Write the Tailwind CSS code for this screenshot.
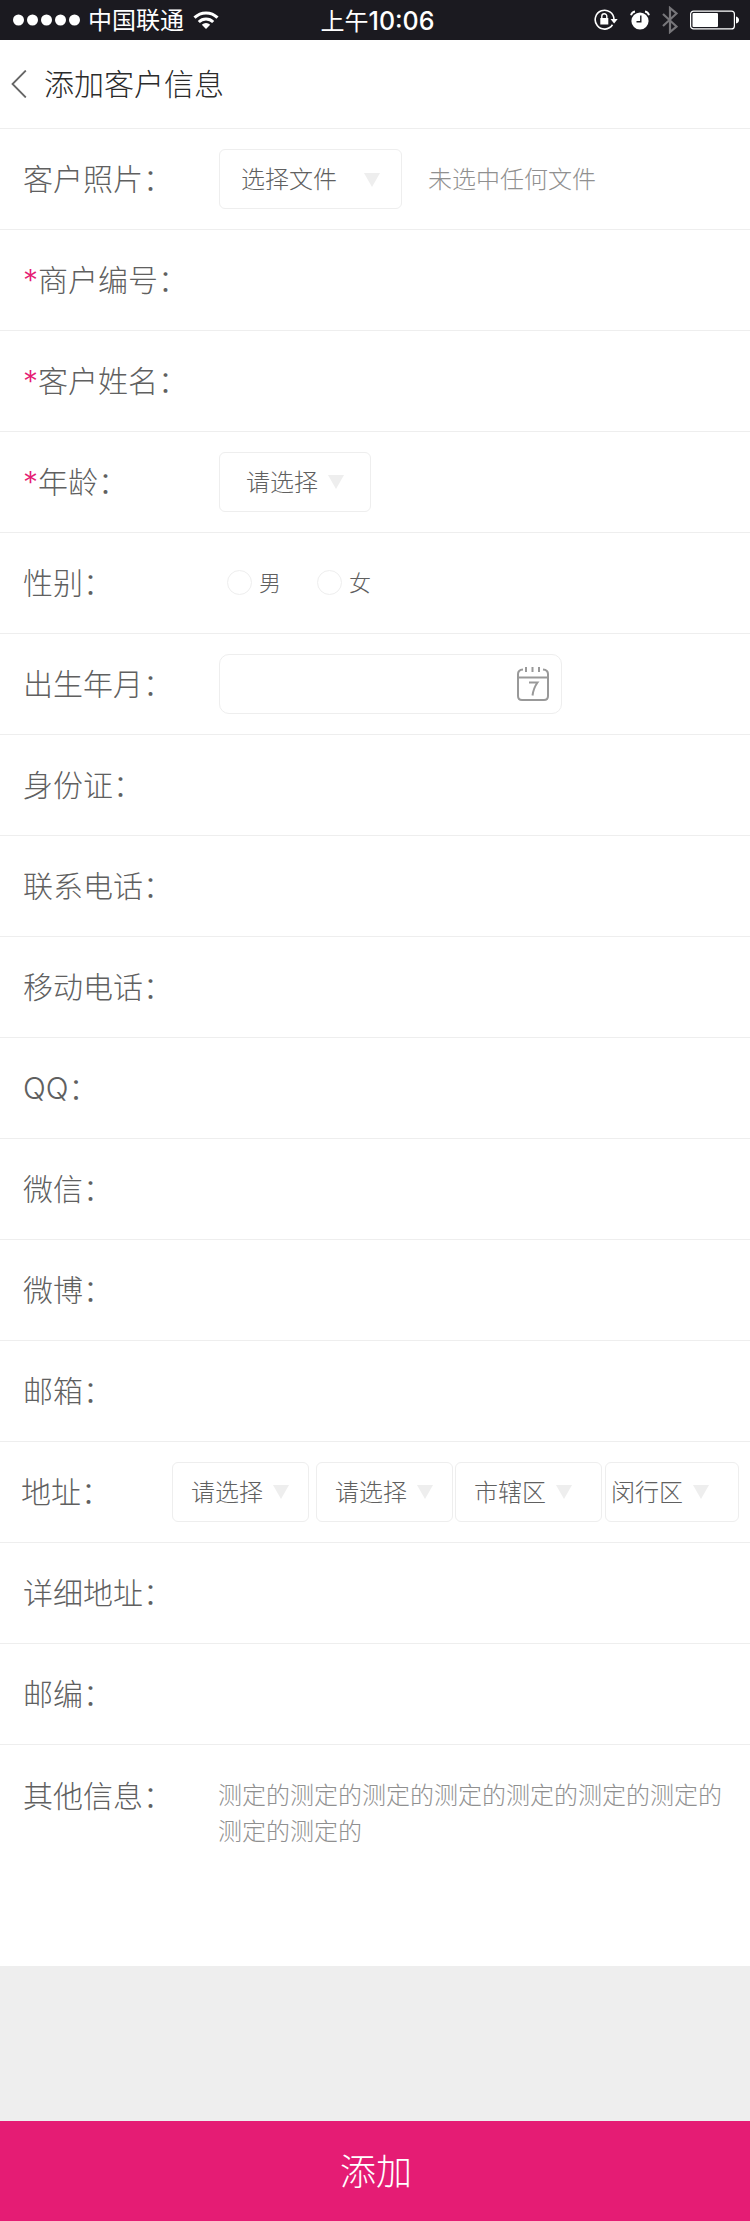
<!DOCTYPE html>
<html lang="zh-CN">
<head>
<meta charset="utf-8">
<meta name="viewport" content="width=device-width, initial-scale=1">
<title>添加客户信息</title>
<script src="https://cdn.jsdelivr.net/npm/@tailwindcss/browser@4"></script>
</head>
<body class="flex min-h-screen flex-col bg-[#eeeeee] font-['Inter','Noto_Sans_CJK_SC',sans-serif] font-light text-[#606060]">

<div class="grid h-10 grid-cols-[1fr_auto_1fr] items-center bg-[#1b1a20] pr-[11px] pl-[13px] text-2xl text-white">
  <div class="flex items-center">
    <svg class="h-3 w-[67px]" viewBox="0 0 67 12" fill="#fff" aria-hidden="true"><circle cx="5.5" cy="6" r="5.5"/><circle cx="19.5" cy="6" r="5.5"/><circle cx="33.5" cy="6" r="5.5"/><circle cx="47.5" cy="6" r="5.5"/><circle cx="61.5" cy="6" r="5.5"/></svg>
    <span class="ml-2 pt-0.5 leading-9 font-normal">中国联通</span>
    <svg class="ml-[9px] h-[18px] w-[26px]" viewBox="0 0 26 18" fill="none" stroke="#fff" stroke-width="3" aria-hidden="true"><path d="M1.5 6.6a16.4 16.4 0 0 1 23 0"/><path d="M5.8 11a10.3 10.3 0 0 1 14.4 0"/><path d="M13 18l-4.2-4.2a6 6 0 0 1 8.4 0z" fill="#fff" stroke="none"/></svg>
  </div>
  <div class="pt-0.5 pl-[3px] leading-9 font-normal">上午<span class="text-[25px] font-medium">10:06</span></div>
  <div class="flex items-center justify-end">
    <svg class="h-[22px] w-6" viewBox="0 0 24 22" fill="none" stroke="#fff" stroke-width="1.6" aria-hidden="true"><path d="M18.5 15.8A9.4 9.4 0 1 1 20 10.5"/><path d="M16.5 10h7.2l-3.6 4.4z" fill="#fff" stroke="none"/><rect x="6.3" y="9" width="8" height="6.5" fill="#fff" stroke="none"/><path d="M7.8 9.500V7.300a2.500 2.500 0 0 1 5 0v2.200" stroke-width="1.400"/></svg>
    <svg class="ml-3 h-[20px] w-5" viewBox="0 0 20 20" aria-hidden="true"><circle cx="10" cy="11" r="8.6" fill="#fff"/><path d="M1 5.200A5 5 0 0 1 5 1.500M19 5.200A5 5 0 0 0 15 1.500" fill="none" stroke="#fff" stroke-width="1.800"/><path d="M10.800 5.500v6.300H6.500" fill="none" stroke="#1b1a20" stroke-width="1.400"/></svg>
    <svg class="ml-3 h-7 w-4" viewBox="0 0 16 28" fill="none" stroke="#77767a" stroke-width="2.200" aria-hidden="true"><path d="M1 8l13.500 12.500L8 26V2l6.500 5.500L1 20"/></svg>
    <svg class="ml-3 h-5 w-[49px]" viewBox="0 0 49 20" aria-hidden="true"><rect x=".6" y="1.100" width="43.800" height="17.800" rx="3" fill="none" stroke="#fff" stroke-width="1.200"/><rect x="2.500" y="3" width="25.500" height="14" rx="1" fill="#fff"/><path d="M46 6.500q3 1 3 3.500t-3 3.500z" fill="#fff"/></svg>
  </div>
</div>

<header class="flex h-[89px] items-center border-b border-[#eeeeee] bg-white pl-[11px] text-[#2b2b2b]">
  <a href="#" aria-label="返回"><svg class="h-7 w-4" viewBox="0 0 16 28" fill="none" stroke="#666" stroke-width="1.800"><path d="M14.800.5L1.500 14l13.300 13.500"/></svg></a>
  <h1 class="ml-[17px] text-3xl">添加客户信息</h1>
</header>

<form class="flex flex-1 flex-col">
  <div class="bg-white text-3xl">
    <div class="flex h-[101px] items-center border-b border-[#eeeeee] pl-[23px]">
      <span class="w-[196px]">客户照片：</span>
      <button type="button" class="flex h-[60px] w-[183px] items-center justify-between rounded-md border border-[#eeeeee] px-[21px] pt-0.5 text-2xl">选择文件<svg class="h-[14px] w-4" viewBox="0 0 16 14" fill="#eee"><path d="M0 0h16L8 14z"/></svg></button>
      <span class="ml-[26px] pt-0.5 text-2xl text-[#909090]">未选中任何文件</span>
    </div>
    <div class="flex h-[101px] items-center border-b border-[#eeeeee] pl-[23px]">
      <label for="merchant" class="w-[196px]"><span class="text-[#e51c74]">*</span>商户编号：</label>
      <input id="merchant" class="h-[60px] min-w-0 flex-1 px-5 text-2xl outline-none">
    </div>
    <div class="flex h-[101px] items-center border-b border-[#eeeeee] pl-[23px]">
      <label for="name" class="w-[196px]"><span class="text-[#e51c74]">*</span>客户姓名：</label>
      <input id="name" class="h-[60px] min-w-0 flex-1 px-5 text-2xl outline-none">
    </div>
    <div class="flex h-[101px] items-center border-b border-[#eeeeee] pl-[23px]">
      <label for="age" class="w-[196px]"><span class="text-[#e51c74]">*</span>年龄：</label>
      <div class="relative">
        <select id="age" class="block h-[60px] w-[152px] appearance-none rounded-md border border-[#eeeeee] pt-0.5 pl-[26px] text-2xl"><option>请选择</option></select>
        <svg class="pointer-events-none absolute top-[23px] right-[27px] h-[14px] w-4" viewBox="0 0 16 14" fill="#eee"><path d="M0 0h16L8 14z"/></svg>
      </div>
    </div>
    <div class="flex h-[101px] items-center border-b border-[#eeeeee] pl-[23px]">
      <span class="w-[204px]">性别：</span>
      <label class="mr-9 flex items-center gap-[7px] text-[22px]"><input type="radio" name="sex" class="size-[25px] appearance-none rounded-full border border-[#eeeeee] checked:border-8 checked:border-[#e51c74]">男</label>
      <label class="flex items-center gap-[7px] text-[22px]"><input type="radio" name="sex" class="size-[25px] appearance-none rounded-full border border-[#eeeeee] checked:border-8 checked:border-[#e51c74]">女</label>
    </div>
    <div class="flex h-[101px] items-center border-b border-[#eeeeee] pl-[23px]">
      <label for="birth" class="w-[196px]">出生年月：</label>
      <div class="relative">
        <input id="birth" class="block h-[60px] w-[343px] rounded-[10px] border border-[#eeeeee] pr-14 pl-5 text-2xl outline-none">
        <svg class="pointer-events-none absolute top-3 right-[13px] h-[35px] w-8" viewBox="0 0 32 35" fill="none" stroke="#999" stroke-width="2" aria-hidden="true"><path d="M6 3.500Q1 4 1 8v22q0 4 4 4h22q4 0 4-4V8q0-4-5-4.500M1 11.500h30"/><path d="M9 1v5M15.500 1v5M22 1v5"/><path d="M12 16.500h8.500q-4 5.500-5 13"/></svg>
      </div>
    </div>
    <div class="flex h-[101px] items-center border-b border-[#eeeeee] pl-[23px]">
      <label for="idcard" class="w-[196px]">身份证：</label>
      <input id="idcard" class="h-[60px] min-w-0 flex-1 px-5 text-2xl outline-none">
    </div>
    <div class="flex h-[101px] items-center border-b border-[#eeeeee] pl-[23px]">
      <label for="phone" class="w-[196px]">联系电话：</label>
      <input id="phone" type="tel" class="h-[60px] min-w-0 flex-1 px-5 text-2xl outline-none">
    </div>
    <div class="flex h-[101px] items-center border-b border-[#eeeeee] pl-[23px]">
      <label for="mobile" class="w-[196px]">移动电话：</label>
      <input id="mobile" type="tel" class="h-[60px] min-w-0 flex-1 px-5 text-2xl outline-none">
    </div>
    <div class="flex h-[101px] items-center border-b border-[#eeeeee] pl-[23px]">
      <label for="qq" class="w-[196px]">QQ：</label>
      <input id="qq" class="h-[60px] min-w-0 flex-1 px-5 text-2xl outline-none">
    </div>
    <div class="flex h-[101px] items-center border-b border-[#eeeeee] pl-[23px]">
      <label for="wechat" class="w-[196px]">微信：</label>
      <input id="wechat" class="h-[60px] min-w-0 flex-1 px-5 text-2xl outline-none">
    </div>
    <div class="flex h-[101px] items-center border-b border-[#eeeeee] pl-[23px]">
      <label for="weibo" class="w-[196px]">微博：</label>
      <input id="weibo" class="h-[60px] min-w-0 flex-1 px-5 text-2xl outline-none">
    </div>
    <div class="flex h-[101px] items-center border-b border-[#eeeeee] pl-[23px]">
      <label for="email" class="w-[196px]">邮箱：</label>
      <input id="email" type="email" class="h-[60px] min-w-0 flex-1 px-5 text-2xl outline-none">
    </div>
    <div class="flex h-[101px] items-center border-b border-[#eeeeee] pl-[21px]">
      <span class="w-[151px]">地址：</span>
      <div class="relative mr-[7px]">
        <select aria-label="省份" class="block h-[60px] w-[137px] appearance-none rounded-md border border-[#eeeeee] pt-0.5 pl-[18px] text-2xl"><option>请选择</option></select>
        <svg class="pointer-events-none absolute top-[23px] right-5 h-[14px] w-4" viewBox="0 0 16 14" fill="#eee"><path d="M0 0h16L8 14z"/></svg>
      </div>
      <div class="relative mr-[2px]">
        <select aria-label="城市" class="block h-[60px] w-[137px] appearance-none rounded-md border border-[#eeeeee] pt-0.5 pl-[18px] text-2xl"><option>请选择</option></select>
        <svg class="pointer-events-none absolute top-[23px] right-5 h-[14px] w-4" viewBox="0 0 16 14" fill="#eee"><path d="M0 0h16L8 14z"/></svg>
      </div>
      <div class="relative mr-[3px]">
        <select aria-label="市辖区" class="block h-[60px] w-[147px] appearance-none rounded-md border border-[#eeeeee] pt-0.5 pl-[18px] text-2xl"><option>市辖区</option></select>
        <svg class="pointer-events-none absolute top-[23px] right-[30px] h-[14px] w-4" viewBox="0 0 16 14" fill="#eee"><path d="M0 0h16L8 14z"/></svg>
      </div>
      <div class="relative">
        <select aria-label="区县" class="block h-[60px] w-[134px] appearance-none rounded-md border border-[#eeeeee] pt-0.5 pl-[5px] text-2xl"><option>闵行区</option></select>
        <svg class="pointer-events-none absolute top-[23px] right-[30px] h-[14px] w-4" viewBox="0 0 16 14" fill="#eee"><path d="M0 0h16L8 14z"/></svg>
      </div>
    </div>
    <div class="flex h-[101px] items-center border-b border-[#eeeeee] pl-[23px]">
      <label for="street" class="w-[196px]">详细地址：</label>
      <input id="street" class="h-[60px] min-w-0 flex-1 px-5 text-2xl outline-none">
    </div>
    <div class="flex h-[101px] items-center border-b border-[#eeeeee] pl-[23px]">
      <label for="zip" class="w-[196px]">邮编：</label>
      <input id="zip" class="h-[60px] min-w-0 flex-1 px-5 text-2xl outline-none">
    </div>
    <div class="flex items-start pt-[33px] pr-6 pb-8 pl-[23px]">
      <label for="other" class="w-[195px] leading-9">其他信息：</label>
      <textarea id="other" class="block h-[156px] min-w-0 flex-1 resize-none text-2xl leading-9 text-[#909090] outline-none">测定的测定的测定的测定的测定的测定的测定的测定的测定的</textarea>
    </div>
  </div>
  <button type="submit" class="mt-auto h-[100px] w-full bg-[#e51c74] pt-0.5 pl-0.5 text-4xl text-white">添加</button>
</form>
</body>
</html>
